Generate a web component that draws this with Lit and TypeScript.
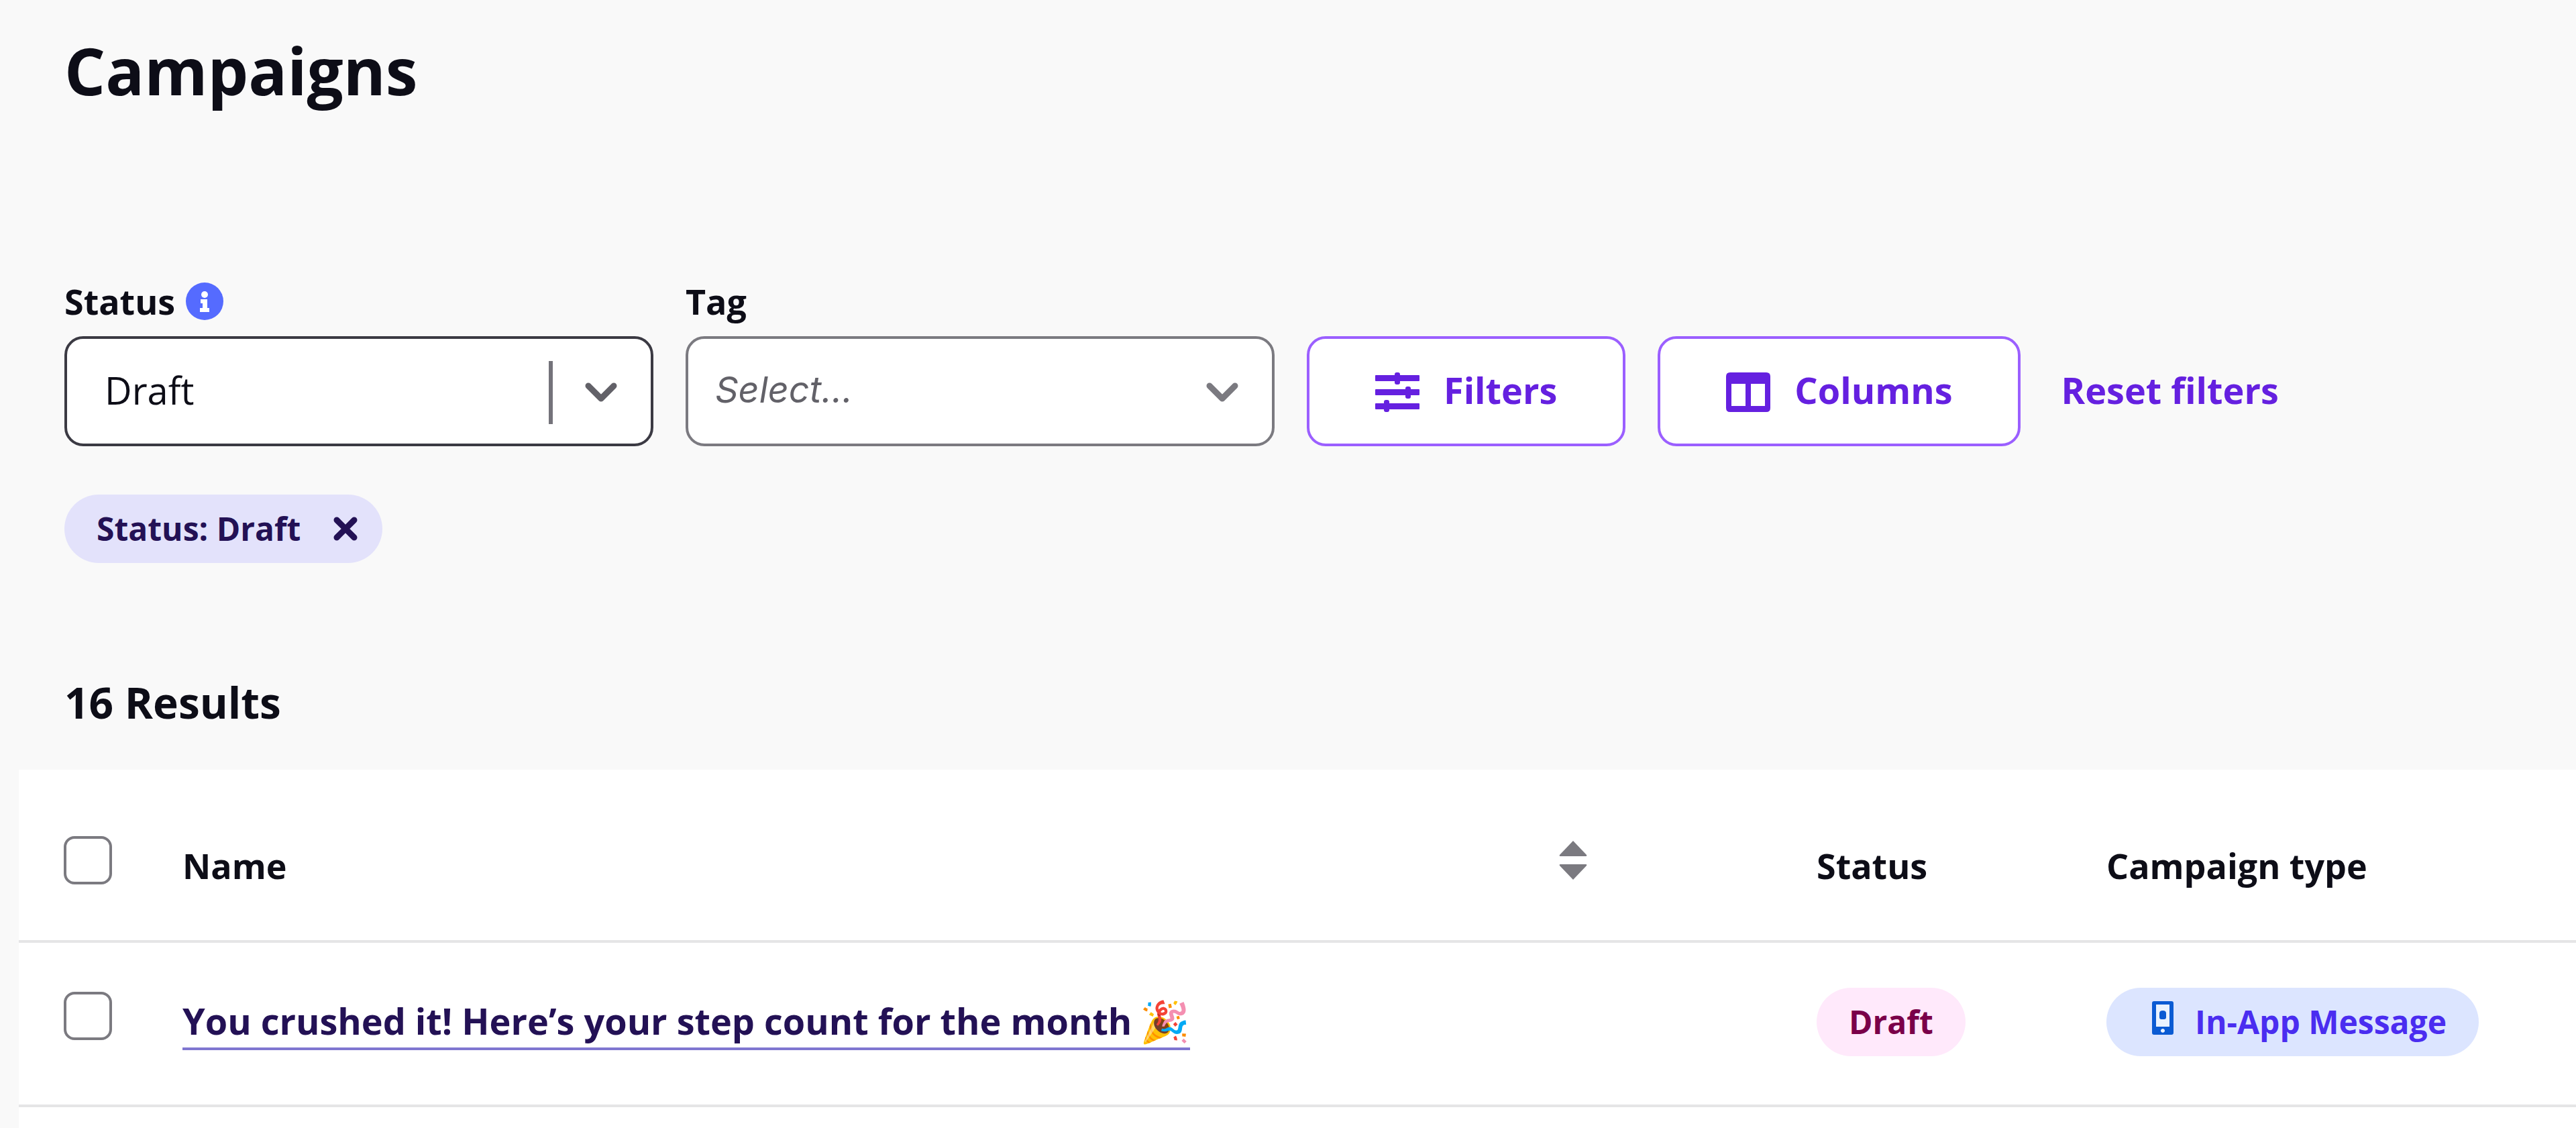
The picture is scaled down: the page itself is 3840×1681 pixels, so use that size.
import { LitElement, html, css } from "lit";
import { customElement, state } from "lit/decorators.js";

interface Campaign {
  id: string;
  name: string;
  emoji: string;
  status: string;
  type: string;
}

const CAMPAIGNS: Campaign[] = [
  {
    id: "step-count",
    name: "You crushed it! Here’s your step count for the month",
    emoji: "🎉",
    status: "Draft",
    type: "In-App Message",
  },
];

const chevron = html`<svg class="chevron" viewBox="0 0 48 30" aria-hidden="true">
  <path d="M5 5 24 24 43 5" fill="none" stroke="currentColor" stroke-width="9" stroke-linejoin="round" stroke-linecap="round" />
</svg>`;

const infoIcon = html`<svg class="info" viewBox="0 0 56 56" role="img" aria-label="About status">
  <circle cx="28" cy="28" r="28" fill="#556bff" />
  <g fill="#fff">
    <circle cx="28" cy="18" r="5" />
    <path d="M22 25h10v13h3v6H21v-6h4v-7h-3z" />
  </g>
</svg>`;

const filterIcon = html`<svg class="icon" viewBox="0 0 66 60" aria-hidden="true">
  <g fill="currentColor">
    <rect x="0" y="4" width="66" height="9" rx="1" />
    <rect x="29" y="0" width="8" height="18" rx="3" />
    <rect x="0" y="25" width="66" height="9" rx="1" />
    <rect x="45" y="21" width="8" height="18" rx="3" />
    <rect x="0" y="46" width="66" height="9" rx="1" />
    <rect x="13" y="41" width="8" height="18" rx="3" />
  </g>
</svg>`;

const columnsIcon = html`<svg class="icon" viewBox="0 0 66 60" aria-hidden="true">
  <path
    fill="currentColor"
    fill-rule="evenodd"
    d="M6 0H60Q66 0 66 6V53Q66 59 60 59H6Q0 59 0 53V6Q0 0 6 0ZM8 17V50H29V17ZM37 17V50H58V17Z"
  />
</svg>`;

const closeIcon = html`<svg class="close-icon" viewBox="0 0 38 38" aria-hidden="true">
  <path d="M6 6 32 32M32 6 6 32" stroke="currentColor" stroke-width="9" stroke-linecap="round" />
</svg>`;

const phoneIcon = html`<svg class="phone" viewBox="0 0 32 50" aria-hidden="true">
  <rect x="4" y="4" width="24" height="42" fill="#eaf3ff" />
  <path
    fill="#0b5bd3"
    fill-rule="evenodd"
    d="M3 0H29Q32 0 32 3V47Q32 50 29 50H3Q0 50 0 47V3Q0 0 3 0ZM6 5V38H26V5ZM16 41a3 3 0 1 0 .01 0Z"
  />
  <path fill="#0b5bd3" d="M16 14q5 0 5 4v6q0 3-3 3h-4q-3 0-3-3v-6q0-4 5-4z" />
</svg>`;

const sortIcon = html`<svg class="sort-icon" viewBox="0 0 42 60" aria-hidden="true">
  <path fill="currentColor" d="M21 1 41 22q1 2-1 2H2q-2 0-1-2ZM21 59 41 38q1-2-1-2H2q-2 0-1 2Z" />
</svg>`;

@customElement("app-root")
export class AppRoot extends LitElement {
  @state() private status = "Draft";

  static styles = css`
    :host {
      display: flex;
      flex-direction: column;
      min-height: 100vh;
      background: #f9f9f9;
      color: #0d0d17;
      font-family: "Open Sans", "Noto Sans", sans-serif;
      font-size: 52px;
      line-height: 72px;
    }
    * {
      box-sizing: border-box;
    }
    button,
    select {
      font: inherit;
      color: inherit;
      cursor: pointer;
    }
    .top {
      padding: 37px 96px 52px;
    }
    h1 {
      margin: 0 0 240px;
      font-size: 96px;
      line-height: 136px;
      font-weight: 700;
    }
    .filters {
      display: flex;
      align-items: flex-end;
      flex-wrap: wrap;
      gap: 48px;
    }
    .field {
      display: flex;
      flex-direction: column;
      gap: 16px;
      width: 878px;
    }
    .field-label {
      display: flex;
      align-items: center;
      gap: 16px;
      font-weight: 700;
    }
    .info {
      width: 56px;
      height: 56px;
    }
    .control {
      display: grid;
      align-items: center;
    }
    .control > * {
      grid-area: 1 / 1;
    }
    .select {
      appearance: none;
      width: 100%;
      height: 164px;
      padding: 0 200px 4px 44px;
      border: 4px solid #7b7a80;
      border-radius: 28px;
      background: #fff;
      font-size: 56px;
      line-height: 72px;
    }
    .select.filled {
      padding-left: 56px;
      border-color: #3b3a43;
    }
    .select.empty {
      padding-left: 40px;
      color: #626168;
      font-family: Inter, "Open Sans", sans-serif;
      font-size: 54px;
      font-style: italic;
    }
    .adornment {
      justify-self: end;
      display: flex;
      align-items: center;
      gap: 48px;
      padding: 4px 54px 0 0;
      color: #7b7a80;
      pointer-events: none;
    }
    .filled + .adornment {
      color: #626168;
    }
    .divider {
      width: 6px;
      height: 94px;
      background: #74737a;
    }
    .chevron {
      width: 48px;
      height: 30px;
    }
    .action,
    .reset {
      height: 164px;
      color: #6520e0;
      font-size: 54px;
      font-weight: 700;
    }
    .action {
      display: flex;
      align-items: center;
      justify-content: center;
      gap: 36px;
      padding: 0 98px 4px;
      border: 4px solid #9b5fff;
      border-radius: 28px;
      background: #fff;
    }
    .icon {
      width: 66px;
      height: 60px;
      margin-top: 8px;
    }
    .reset {
      padding: 0 12px 4px;
      border: 0;
      background: none;
    }
    .chips {
      display: flex;
      margin-top: 72px;
    }
    .pill {
      display: inline-flex;
      align-items: center;
      height: 102px;
      padding: 0 48px;
      border-radius: 51px;
      font-size: 48px;
      font-weight: 700;
    }
    .chip {
      gap: 48px;
      padding-right: 36px;
      background: #e3e2fb;
      color: #231155;
    }
    .close {
      display: flex;
      padding: 0;
      border: 0;
      background: none;
    }
    .close-icon {
      width: 38px;
      height: 38px;
    }
    h2 {
      margin: 160px 0 0;
      font-size: 64px;
      line-height: 96px;
      font-weight: 700;
    }
    .results {
      flex: 1;
      margin-left: 28px;
      background: #fff;
    }
    table {
      width: 100%;
      table-layout: fixed;
      border-collapse: collapse;
    }
    .col-check {
      width: 244px;
    }
    .col-status {
      width: 432px;
    }
    .col-type {
      width: 700px;
    }
    th,
    td {
      padding: 0;
      border-bottom: 4px solid #e5e5e6;
      text-align: left;
      vertical-align: middle;
    }
    th {
      height: 256px;
      padding-top: 32px;
      font-weight: 700;
    }
    td {
      height: 245px;
      padding-bottom: 6px;
    }
    .check {
      padding-left: 67px;
    }
    th.check {
      padding-top: 16px;
    }
    td.check {
      padding-bottom: 24px;
    }
    .box {
      appearance: none;
      display: block;
      width: 72px;
      height: 72px;
      margin: 0;
      border: 4px solid #7b7a80;
      border-radius: 16px;
      background: #fff;
    }
    .box:checked {
      background: #6520e0;
    }
    .name-head {
      display: flex;
      align-items: center;
      justify-content: space-between;
      padding-right: 342px;
    }
    .sort {
      display: flex;
      padding: 0 0 16px;
      border: 0;
      background: none;
      color: #7b7a80;
    }
    .sort-icon {
      width: 42px;
      height: 60px;
    }
    .name {
      display: inline-flex;
      align-items: center;
      gap: 12px;
      border-bottom: 4px solid #7f76d0;
      color: #231155;
      font-size: 54px;
      line-height: 80px;
      font-weight: 700;
      text-decoration: none;
    }
    .emoji {
      font-size: 60px;
    }
    .status {
      background: #ffe9fb;
      color: #7a0049;
    }
    .type {
      gap: 32px;
      padding-left: 68px;
      background: #dce5ff;
      color: #4a2df0;
    }
    .phone {
      width: 32px;
      height: 50px;
      margin-bottom: 12px;
    }
  `;

  private onStatus(e: Event) {
    this.status = (e.target as HTMLSelectElement).value;
  }

  private row(c: Campaign) {
    return html`<tr>
      <td class="check"><input class="box" type="checkbox" aria-label="Select ${c.name}" /></td>
      <td>
        <a class="name" href="#${c.id}"><span>${c.name}</span><span class="emoji">${c.emoji}</span></a>
      </td>
      <td><span class="pill status">${c.status}</span></td>
      <td><span class="pill type">${phoneIcon}${c.type}</span></td>
    </tr>`;
  }

  render() {
    return html`
      <header class="top">
        <h1>Campaigns</h1>
        <div class="filters">
          <div class="field">
            <label class="field-label" for="status">Status ${infoIcon}</label>
            <div class="control">
              <select id="status" class="select filled" @change=${this.onStatus}>
                <option>Draft</option>
                <option>Active</option>
              </select>
              <span class="adornment"><span class="divider"></span>${chevron}</span>
            </div>
          </div>
          <div class="field">
            <label class="field-label" for="tag">Tag</label>
            <div class="control">
              <select id="tag" class="select empty">
                <option>Select...</option>
              </select>
              <span class="adornment">${chevron}</span>
            </div>
          </div>
          <button class="action" type="button">${filterIcon}Filters</button>
          <button class="action" type="button">${columnsIcon}Columns</button>
          <button class="reset" type="button">Reset filters</button>
        </div>
        <div class="chips">
          <span class="pill chip">
            Status: ${this.status}
            <button class="close" type="button" aria-label="Remove status filter">${closeIcon}</button>
          </span>
        </div>
        <h2>16 Results</h2>
      </header>
      <main class="results">
        <table>
          <colgroup>
            <col class="col-check" />
            <col />
            <col class="col-status" />
            <col class="col-type" />
          </colgroup>
          <thead>
            <tr>
              <th class="check"><input class="box" type="checkbox" aria-label="Select all" /></th>
              <th>
                <div class="name-head">
                  Name
                  <button class="sort" type="button" aria-label="Sort by name">${sortIcon}</button>
                </div>
              </th>
              <th>Status</th>
              <th>Campaign type</th>
            </tr>
          </thead>
          <tbody>
            ${CAMPAIGNS.map((c) => this.row(c))}
          </tbody>
        </table>
      </main>
    `;
  }
}
